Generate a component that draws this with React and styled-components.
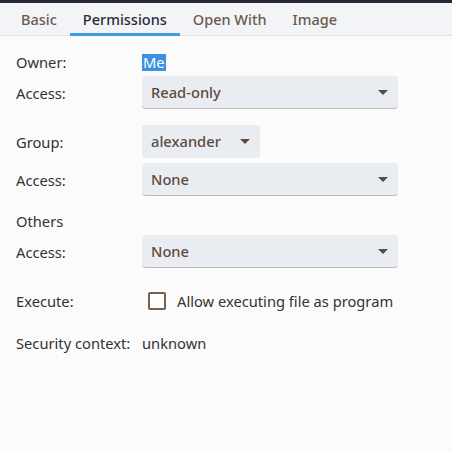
import React from "react";
import styled, { createGlobalStyle } from "styled-components";

const GlobalStyle = createGlobalStyle`
  html, body {
    margin: 0;
    padding: 0;
    background: #fbfbfb;
  }
  body {
    font-family: "Noto Sans", "Open Sans", sans-serif;
    font-size: 14.7px;
    color: #3c3c3c;
  }
`;

const Window = styled.div`
  width: 452px;
  height: 452px;
  background: #fbfbfb;
  overflow: hidden;
`;

const TopEdge = styled.div`
  height: 3px;
  background: #262838;
`;

const TabBar = styled.div`
  height: 33px;
  display: flex;
  align-items: stretch;
  padding-left: 8px;
  background: #f2f4f7;
  border-bottom: 1px solid #dfe3e8;
  box-sizing: border-box;
`;

const Tab = styled.div`
  display: flex;
  align-items: center;
  padding: 0 13px;
  font-size: 14.5px;
  font-weight: 500;
  color: ${(p) => (p.$active ? "#2b2b35" : "#6a5a50")};
  border-bottom: 3px solid ${(p) => (p.$active ? "#3d9ce8" : "transparent")};
  margin-bottom: -1px;
  padding-top: 1px;
`;

const Content = styled.div`
  padding: 16px 54px 0 16px;
  display: flex;
  flex-direction: column;
`;

const Row = styled.div`
  display: grid;
  grid-template-columns: 126px 1fr;
  align-items: center;
  height: ${(p) => p.$h || 33}px;
  margin-top: ${(p) => p.$mt || 0}px;
`;

const Label = styled.div`
  color: #333333;
  white-space: nowrap;
`;

const Selected = styled.span`
  justify-self: start;
  background: #3d8fe0;
  color: #ffffff;
  padding: 0 1px;
  line-height: 17px;
`;

const Combo = styled.div`
  width: ${(p) => p.$w || "100%"};
  height: 33px;
  box-sizing: border-box;
  display: flex;
  align-items: center;
  justify-content: space-between;
  padding: 0 10px 0 9px;
  background: #e9edf1;
  border-radius: 4px;
  border-bottom: 1px solid ${(p) => (p.$flat ? "transparent" : "#bdb8b2")};
  font-weight: 500;
  color: #5d4a3e;
`;

const Arrow = styled.span`
  width: 0;
  height: 0;
  border-left: 5px solid transparent;
  border-right: 5px solid transparent;
  border-top: 5px solid #5d4a3e;
`;

const CheckLine = styled.div`
  display: flex;
  align-items: center;
  gap: 11px;
  padding-left: 6px;
  color: #333333;
  white-space: nowrap;
`;

const Box = styled.span`
  width: 14px;
  height: 14px;
  border: 2px solid #76614f;
  border-radius: 2px;
  background: #ffffff;
`;

const Value = styled.span`
  color: #333333;
`;

export default function App() {
  return (
    <Window>
      <GlobalStyle />
      <TopEdge />
      <TabBar>
        <Tab>Basic</Tab>
        <Tab $active>Permissions</Tab>
        <Tab>Open With</Tab>
        <Tab>Image</Tab>
      </TabBar>
      <Content>
        <Row $h={20}>
          <Label>Owner:</Label>
          <Selected>Me</Selected>
        </Row>
        <Row $mt={4}>
          <Label>Access:</Label>
          <Combo>
            Read-only
            <Arrow />
          </Combo>
        </Row>
        <Row $mt={16}>
          <Label>Group:</Label>
          <Combo $w="118px" $flat>
            alexander
            <Arrow />
          </Combo>
        </Row>
        <Row $mt={5}>
          <Label>Access:</Label>
          <Combo>
            None
            <Arrow />
          </Combo>
        </Row>
        <Row $h={22} $mt={14}>
          <Label>Others</Label>
        </Row>
        <Row $mt={3}>
          <Label>Access:</Label>
          <Combo>
            None
            <Arrow />
          </Combo>
        </Row>
        <Row $mt={16}>
          <Label>Execute:</Label>
          <CheckLine>
            <Box />
            Allow executing file as program
          </CheckLine>
        </Row>
        <Row $mt={9}>
          <Label>Security context:</Label>
          <Value>unknown</Value>
        </Row>
      </Content>
    </Window>
  );
}
